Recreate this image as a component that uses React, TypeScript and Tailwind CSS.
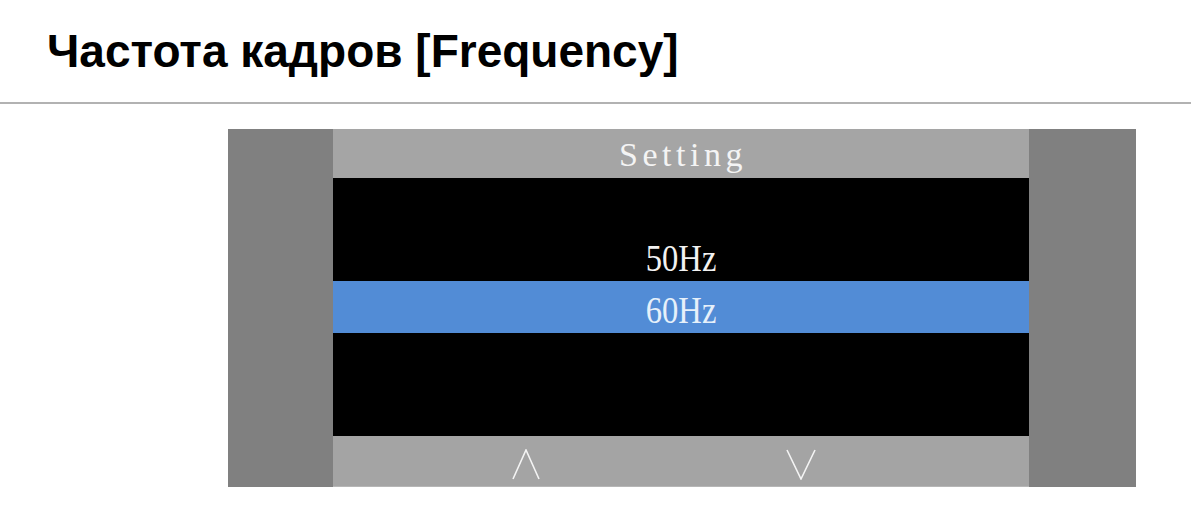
export default function App() {
  const rows = [
    { label: "", h: "h-[52px]" },
    { label: "50Hz", h: "h-[51px]" },
    { label: "60Hz", h: "h-[52px]" },
    { label: "", h: "h-[52px]" },
    { label: "", h: "h-[51px]" },
  ];

  return (
    <div className="w-[1191px] h-[507px] bg-white overflow-hidden">
      <header className="h-[104px] border-b-2 border-[#b2b2b2] pl-[47px] pt-[25px]">
        <h1 className="text-[46px] leading-[52px] font-bold text-black font-['Liberation_Sans',Arial,sans-serif]">
          Частота кадров [Frequency]
        </h1>
      </header>

      <div className="ml-[228px] mt-[25px] flex w-[908px] h-[358px]">
        <div className="w-[105px] bg-[#808080]" />

        <div className="w-[696px] flex flex-col">
          <div className="h-[49px] bg-[#a5a5a5] flex items-center justify-center pt-[3px] pl-[4px]">
            <span className="text-[34px] leading-none tracking-[4.5px] text-[#f4f4f4] font-['Liberation_Serif',serif]">
              Setting
            </span>
          </div>

          <div className="flex-1 bg-black flex flex-col">
            {rows.map((row, i) => (
              <div
                key={i}
                className={
                  row.label === "60Hz"
                    ? row.h + " bg-[#528cd6] flex items-center justify-center pt-[6px]"
                    : row.h + " flex items-center justify-center pt-[6px]"
                }
              >
                {row.label && (
                  <span
                    className={
                      row.label === "60Hz"
                        ? "text-[37px] leading-none text-[#e6f0fa] font-['Liberation_Serif',serif] scale-x-[0.88] inline-block"
                        : "text-[37px] leading-none text-[#f2f2f2] font-['Liberation_Serif',serif] scale-x-[0.88] inline-block"
                    }
                  >
                    {row.label}
                  </span>
                )}
              </div>
            ))}
          </div>

          <div className="h-[51px] bg-[#a4a4a4] border-b border-[#b6b6b6] flex items-start pt-[13px] pl-[179px]">
            <svg width="28" height="31" viewBox="0 0 28 31" fill="none">
              <polyline points="1,30 14,1 27,30" stroke="#f4f4f4" strokeWidth="1.6" />
            </svg>
            <svg width="30" height="31" viewBox="0 0 30 31" fill="none" className="ml-[246px]">
              <polyline points="1,1 15,30 29,1" stroke="#f4f4f4" strokeWidth="1.6" />
            </svg>
          </div>
        </div>

        <div className="w-[107px] bg-[#808080]" />
      </div>
    </div>
  );
}
